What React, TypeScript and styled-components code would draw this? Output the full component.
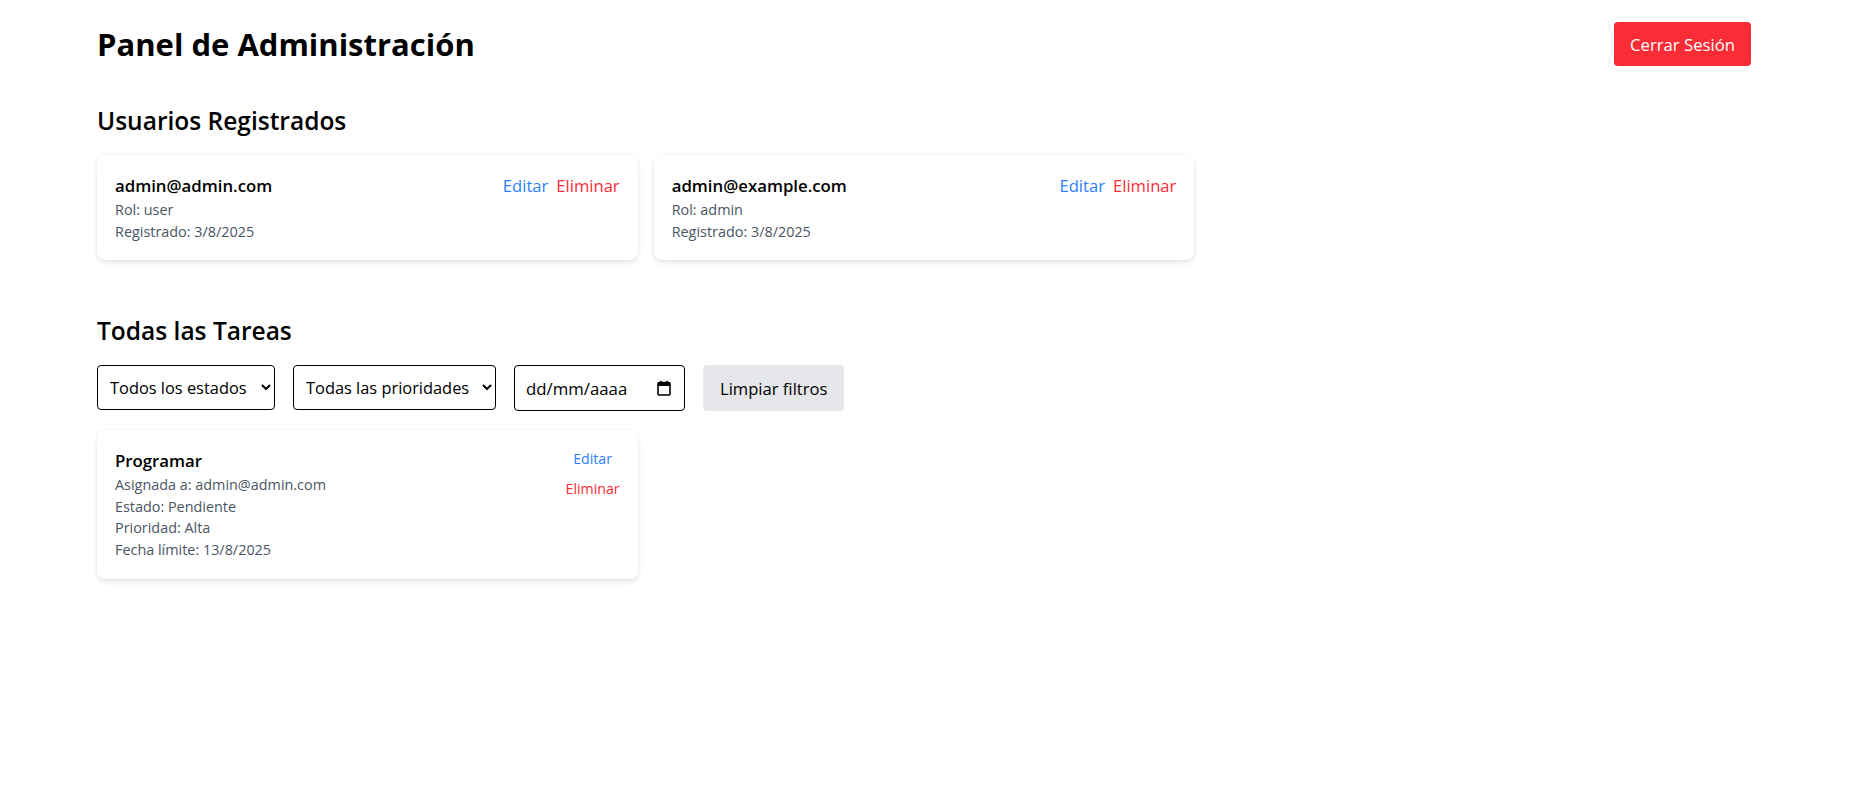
import React from "react";
import styled, { createGlobalStyle } from "styled-components";

const GlobalStyle = createGlobalStyle`
  * { box-sizing: border-box; }
  body {
    margin: 0;
    background: #ffffff;
    color: #000000;
    font-family: "Open Sans", "Noto Sans", sans-serif;
  }
`;

const Page = styled.div`
  padding: 22px 116px 40px 97px;
`;

const Header = styled.header`
  display: flex;
  justify-content: space-between;
  align-items: center;
`;

const Title = styled.h1`
  margin: 0;
  font-size: 31px;
  line-height: 36px;
  font-weight: 700;
`;

const LogoutButton = styled.button`
  height: 44px;
  padding: 0 16px;
  border: none;
  border-radius: 4px;
  background: #fb2c36;
  color: #ffffff;
  font-family: inherit;
  font-size: 16.7px;
  cursor: pointer;
`;

const Section = styled.section<{ $top: number }>`
  margin-top: ${(p) => p.$top}px;
`;

const SectionTitle = styled.h2`
  margin: 0 0 18px;
  font-size: 24.5px;
  line-height: 32px;
  font-weight: 600;
`;

const Grid = styled.div`
  display: grid;
  grid-template-columns: repeat(3, 1fr);
  gap: 16px;
`;

const Card = styled.div`
  background: #ffffff;
  border-radius: 8px;
  padding: 17px 18px 18px;
  box-shadow: 0 3px 6px -1px rgba(0, 0, 0, 0.12), 0 0 3px rgba(0, 0, 0, 0.06);
  display: flex;
  justify-content: space-between;
  align-items: flex-start;
`;

const CardInfo = styled.div`
  display: flex;
  flex-direction: column;
`;

const CardTitle = styled.div`
  font-size: 16.8px;
  line-height: 27px;
  font-weight: 600;
`;

const Meta = styled.div`
  font-size: 14.4px;
  line-height: 21.6px;
  color: #4a5565;
`;

const InlineActions = styled.div`
  display: flex;
  gap: 8px;
`;

const StackActions = styled.div`
  display: flex;
  flex-direction: column;
  align-items: center;
  gap: 9px;
  padding-top: 1px;
`;

const ActionLink = styled.button<{ $tone: "edit" | "delete"; $small?: boolean }>`
  background: none;
  border: none;
  padding: 0;
  font-family: inherit;
  font-size: ${(p) => (p.$small ? 14.2 : 16.6)}px;
  line-height: ${(p) => (p.$small ? 21 : 27)}px;
  color: ${(p) => (p.$tone === "edit" ? "#2b7fff" : "#fb2c36")};
  cursor: pointer;
`;

const Filters = styled.div`
  display: flex;
  gap: 18px;
  margin-bottom: 19px;
`;

const Select = styled.select<{ $width: number }>`
  width: ${(p) => p.$width}px;
  height: 45px;
  padding: 0 6px 0 8px;
  border: 1px solid #000000;
  border-radius: 4px;
  background: #ffffff;
  color: #000000;
  font-family: inherit;
  font-size: 16.4px;
`;

const DateField = styled.label`
  width: 171px;
  height: 46px;
  display: flex;
  align-items: center;
  justify-content: space-between;
  padding: 0 12px 0 11px;
  border: 1px solid #000000;
  border-radius: 4px;
  font-size: 16.8px;
  color: #000000;
`;

const ClearButton = styled.button`
  height: 46px;
  padding: 0 17px;
  border: none;
  border-radius: 4px;
  background: #e5e7eb;
  color: #000000;
  font-family: inherit;
  font-size: 16.6px;
  cursor: pointer;
`;

const CalendarIcon = () => (
  <svg width="16" height="16" viewBox="0 0 16 16" aria-hidden="true">
    <rect x="2" y="2.5" width="12" height="12.5" rx="1.2" fill="none" stroke="#000" strokeWidth="1.6" />
    <rect x="2" y="2.5" width="12" height="3.5" fill="#000" />
    <rect x="4.2" y="0.8" width="1.6" height="2.5" fill="#000" />
    <rect x="10.2" y="0.8" width="1.6" height="2.5" fill="#000" />
  </svg>
);

const users = [
  { email: "admin@admin.com", role: "user", date: "3/8/2025" },
  { email: "admin@example.com", role: "admin", date: "3/8/2025" },
];

export default function App() {
  return (
    <>
      <GlobalStyle />
      <Page>
        <Header>
          <Title>Panel de Administración</Title>
          <LogoutButton>Cerrar Sesión</LogoutButton>
        </Header>

        <Section $top={39}>
          <SectionTitle>Usuarios Registrados</SectionTitle>
          <Grid>
            {users.map((u) => (
              <Card key={u.email}>
                <CardInfo>
                  <CardTitle>{u.email}</CardTitle>
                  <Meta>Rol: {u.role}</Meta>
                  <Meta>Registrado: {u.date}</Meta>
                </CardInfo>
                <InlineActions>
                  <ActionLink $tone="edit">Editar</ActionLink>
                  <ActionLink $tone="delete">Eliminar</ActionLink>
                </InlineActions>
              </Card>
            ))}
          </Grid>
        </Section>

        <Section $top={55}>
          <SectionTitle>Todas las Tareas</SectionTitle>
          <Filters>
            <Select $width={178} defaultValue="">
              <option value="">Todos los estados</option>
            </Select>
            <Select $width={203} defaultValue="">
              <option value="">Todas las prioridades</option>
            </Select>
            <DateField>
              <span>dd/mm/aaaa</span>
              <CalendarIcon />
            </DateField>
            <ClearButton>Limpiar filtros</ClearButton>
          </Filters>
          <Grid>
            <Card>
              <CardInfo>
                <CardTitle>Programar</CardTitle>
                <Meta>Asignada a: admin@admin.com</Meta>
                <Meta>Estado: Pendiente</Meta>
                <Meta>Prioridad: Alta</Meta>
                <Meta>Fecha límite: 13/8/2025</Meta>
              </CardInfo>
              <StackActions>
                <ActionLink $tone="edit" $small>Editar</ActionLink>
                <ActionLink $tone="delete" $small>Eliminar</ActionLink>
              </StackActions>
            </Card>
          </Grid>
        </Section>
      </Page>
    </>
  );
}
